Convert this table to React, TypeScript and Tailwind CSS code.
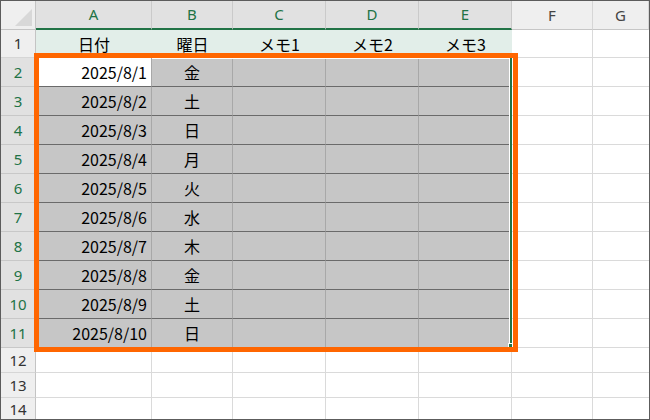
import React from "react";

const days = ["金", "土", "日", "月", "火", "水", "木", "金", "土", "日"];
const letters = ["A", "B", "C", "D", "E", "F", "G"];
const memo = ["日付", "曜日", "メモ1", "メモ2", "メモ3"];

const cjk = "font-['Noto_Sans_CJK_JP',sans-serif]";
const latin = "font-['Noto_Sans',sans-serif]";

function App() {
  const cells: React.ReactNode[] = [];

  // header row
  cells.push(
    <div key="corner" className="relative bg-[#efefef] border-r border-b border-[#c4c4c4]">
      <svg className="absolute right-[2px] bottom-[3px]" width="18" height="17" viewBox="0 0 18 17">
        <polygon points="17,0 17,17 0,17" fill="#d8d8d8" />
      </svg>
    </div>
  );
  letters.forEach((l, i) => {
    const sel = i < 5;
    cells.push(
      <div
        key={"h" + l}
        className={
          "flex items-center justify-center text-[15px] " +
          latin +
          " " +
          (sel
            ? "bg-[#e1e1e1] border-b-2 border-b-[#217346] border-r border-r-[#cacaca] text-[#217346]"
            : "bg-[#efefef] border-b border-b-[#c6c6c6] border-r border-r-[#d6d6d6] text-[#444444]")
        }
      >
        {l}
      </div>
    );
  });

  // row 1
  cells.push(
    <div key="r1" className={"flex items-center justify-center bg-[#efefef] border-r border-r-[#c4c4c4] border-b border-b-[#d6d6d6] text-[15px] text-[#333333] " + latin}>
      1
    </div>
  );
  memo.forEach((m, i) => {
    cells.push(
      <div key={"m" + i} className={"flex items-center justify-center bg-[#e2eee9] text-[16px] text-black " + cjk}>
        {m}
      </div>
    );
  });
  cells.push(<div key="r1f" className="border-r border-b border-[#dadada]" />);
  cells.push(<div key="r1g" className="border-b border-[#dadada]" />);

  // rows 2-11
  days.forEach((d, i) => {
    const r = i + 2;
    cells.push(
      <div key={"rh" + r} className={"flex items-center justify-center bg-[#e1e1e1] border-r border-r-[#c4c4c4] border-b border-b-[#c8c8c8] text-[15px] text-[#217346] " + latin}>
        {r}
      </div>
    );
    cells.push(
      <div
        key={"a" + r}
        className={
          "flex items-center justify-end pr-[4px] border-b border-b-[#6a6a6a] border-r border-r-[#a8a8a8] text-[16px] text-black " +
          cjk +
          " " +
          (r === 2 ? "bg-white" : "bg-[#c6c6c6]")
        }
      >
        2025/8/{i + 1}
      </div>
    );
    cells.push(
      <div key={"b" + r} className={"flex items-center justify-center bg-[#c6c6c6] border-b border-b-[#6a6a6a] border-r border-r-[#a8a8a8] text-[16px] text-black " + cjk}>
        {d}
      </div>
    );
    ["c", "d", "e"].forEach((c) => {
      cells.push(<div key={c + r} className="bg-[#c6c6c6] border-b border-b-[#6a6a6a] border-r border-r-[#a8a8a8]" />);
    });
    cells.push(<div key={"f" + r} className="border-r border-b border-[#dadada]" />);
    cells.push(<div key={"g" + r} className="border-b border-[#dadada]" />);
  });

  // rows 12-14
  [12, 13, 14].forEach((r) => {
    cells.push(
      <div key={"rh" + r} className={"flex items-center justify-center bg-[#efefef] border-r border-r-[#c4c4c4] border-b border-b-[#d6d6d6] text-[15px] text-[#333333] " + latin}>
        {r}
      </div>
    );
    for (let c = 0; c < 7; c++) {
      cells.push(
        <div key={"x" + r + c} className={"border-b border-[#dadada] " + (c < 6 ? "border-r" : "")} />
      );
    }
  });

  return (
    <div className="w-[650px] h-[420px] bg-white">
      <div className="relative w-[650px] h-[420px] border border-[#5c5c5c] overflow-hidden bg-white">
        <div className="grid w-full h-full grid-cols-[35px_116px_81px_93px_93px_93px_81px_1fr] grid-rows-[29px_28px_repeat(10,29px)_25px_25px_1fr]">
          {cells}
        </div>
        {/* selection white inner line */}
        <div className="absolute left-[151px] top-[57px] w-[358px] h-[1px] bg-white" />
        <div className="absolute left-[508px] top-[57px] w-[1px] h-[289px] bg-white" />
        {/* selection green border */}
        <div className="absolute left-[509px] top-[57px] w-[2px] h-[289px] bg-[#217346]" />
        {/* fill handle */}
        <div className="absolute left-[507px] top-[342px] w-[5px] h-[5px] bg-[#217346] border border-white" />
        {/* orange highlight */}
        <div className="absolute left-[33px] top-[52px] w-[484px] h-[299px] border-[5px] border-[#ff6600]" />
      </div>
    </div>
  );
}

export default App;
